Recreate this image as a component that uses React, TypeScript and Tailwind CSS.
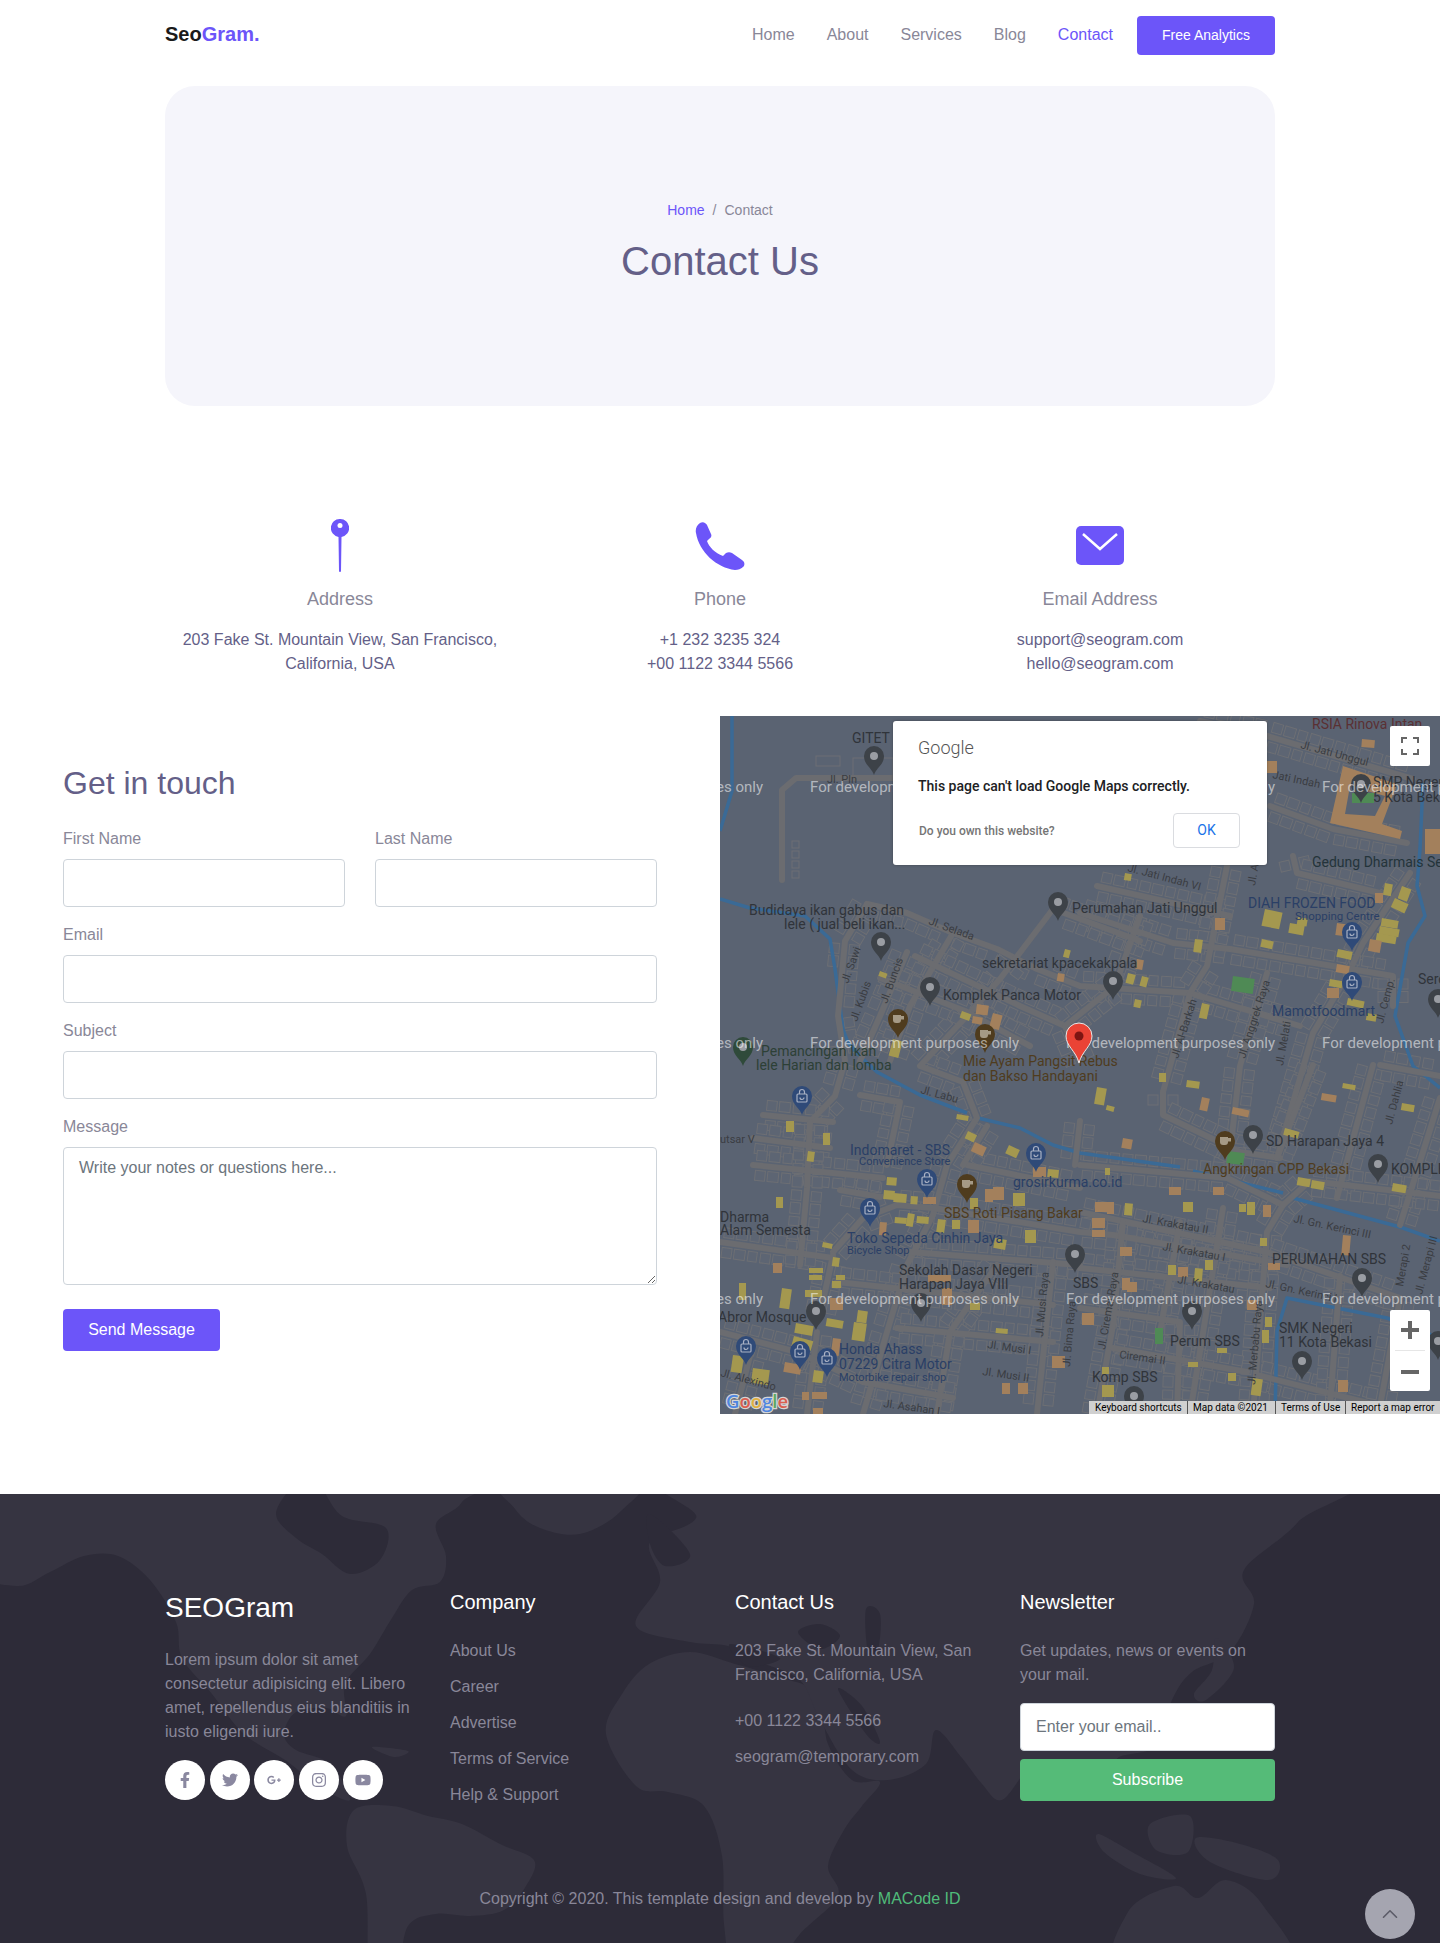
import { ChevronUp } from 'lucide-react';
import { FaFacebookF, FaTwitter, FaGooglePlusG, FaInstagram, FaYoutube } from 'react-icons/fa';

type Pt = [number, number];

const rivers: Pt[][] = [
  [[12, 0], [12, 75], [0, 115]],
  [[0, 183], [30, 192], [85, 200], [110, 223], [115, 253], [123, 313], [128, 327], [143, 343], [157, 356], [200, 379], [247, 397]],
  [[258, 402], [300, 412], [333, 429], [360, 437], [460, 451]],
  [[473, 455], [563, 477]],
  [[573, 482], [680, 511], [720, 525]],
  [[555, 698], [557, 615], [567, 582], [667, 602], [720, 622]],
  [[703, 67], [700, 133], [697, 170], [705, 200], [688, 227], [675, 300], [693, 350], [720, 372]],
];

const roads: Pt[][] = [
  [[62, 164], [62, 74], [76, 62], [180, 62]],
  [[147, 188], [187, 197], [233, 217], [277, 233], [317, 253], [360, 270], [470, 277], [580, 310]],
  [[147, 188], [125, 225], [118, 300], [125, 345], [115, 380], [90, 406]],
  [[333, 193], [280, 263], [247, 300], [200, 350], [243, 366], [257, 402], [227, 449], [213, 499], [187, 549], [167, 616], [143, 698]],
  [[187, 236], [160, 300], [140, 345]],
  [[233, 217], [190, 290], [170, 345]],
  [[195, 240], [300, 290], [345, 310]],
  [[160, 262], [245, 295], [310, 330]],
  [[547, 20], [693, 63]],
  [[480, 5], [547, 20]],
  [[550, 90], [613, 113], [687, 127]],
  [[573, 140], [577, 157], [660, 177]],
  [[690, 157], [643, 227], [627, 260], [593, 317], [557, 442]],
  [[510, 233], [673, 260], [673, 290]],
  [[547, 257], [520, 350], [507, 462]],
  [[360, 197], [453, 227], [510, 233]],
  [[377, 170], [510, 200]],
  [[507, 150], [487, 250], [470, 277], [443, 376]],
  [[420, 200], [395, 270], [345, 310], [360, 345]],
  [[333, 193], [420, 225]],
  [[113, 536], [143, 502], [177, 489], [213, 492], [360, 516], [393, 519], [567, 549]],
  [[100, 599], [113, 539]],
  [[97, 616], [87, 698]],
  [[0, 526], [113, 542]],
  [[43, 399], [113, 406]],
  [[33, 422], [110, 432]],
  [[33, 449], [163, 462]],
  [[120, 474], [160, 481]],
  [[140, 379], [180, 386], [167, 449]],
  [[90, 406], [87, 472], [80, 549]],
  [[177, 612], [333, 626]],
  [[190, 536], [360, 549]],
  [[333, 546], [317, 698]],
  [[277, 549], [230, 616], [217, 698]],
  [[117, 566], [333, 589]],
  [[0, 616], [77, 636], [143, 666], [233, 682]],
  [[247, 449], [360, 472]],
  [[267, 410], [243, 449]],
  [[360, 405], [355, 449]],
  [[443, 376], [443, 399], [520, 436], [560, 442]],
  [[360, 449], [507, 462], [563, 489], [547, 516], [533, 698]],
  [[653, 349], [617, 482]],
  [[680, 509], [720, 382]],
  [[360, 496], [547, 536], [680, 582]],
  [[360, 552], [550, 572]],
  [[403, 506], [393, 609], [377, 698]],
  [[503, 492], [470, 698]],
  [[460, 506], [440, 616]],
  [[360, 592], [460, 606], [457, 698]],
  [[393, 632], [527, 656]],
  [[537, 659], [660, 690]],
  [[593, 349], [557, 442]],
  [[563, 489], [590, 465], [720, 480]],
  [[620, 560], [610, 690]],
  [[680, 582], [660, 690]],
  [[660, 349], [720, 360]],
  [[30, 640], [15, 698]],
];

type Box = [number, number, number, number, number?];

const yellows: Box[] = [
  [160, 255, 8, 5, 20], [242, 295, 10, 7, 20], [345, 233, 6, 8, 15], [173, 323, 10, 17, 15],
  [545, 193, 18, 17, 12], [570, 207, 15, 10, 10], [578, 201, 10, 8, 10], [542, 223, 12, 8, 12], [475, 223, 8, 13, 8],
  [618, 233, 15, 8, 12], [610, 263, 13, 7, 10], [628, 282, 17, 7, 12], [647, 297, 10, 7, 10], [662, 202, 17, 8, 10],
  [660, 210, 20, 8, 10], [657, 217, 20, 8, 10], [675, 182, 15, 10, 25], [682, 170, 10, 13, 20], [665, 167, 8, 12, 10],
  [408, 257, 8, 10, 15], [422, 260, 7, 10, 15], [415, 283, 7, 8, 12], [405, 157, 7, 7, 10], [482, 287, 8, 15, 12],
  [66, 405, 8, 11], [103, 417, 7, 12], [88, 435, 7, 10, 8], [56, 481, 7, 11], [19, 567, 7, 17], [62, 572, 10, 20, 8],
  [89, 552, 14, 5], [89, 559, 13, 5], [116, 559, 9, 5], [112, 565, 9, 7], [113, 541, 7, 9, 8], [103, 526, 10, 5, 12],
  [85, 574, 17, 7], [107, 602, 17, 8, 10], [76, 607, 18, 10, 10], [74, 620, 20, 10, 15], [134, 606, 13, 18, 8],
  [138, 594, 10, 12, 8], [33, 652, 17, 15, 8], [13, 639, 11, 17, 8], [94, 654, 10, 12, 8], [167, 461, 10, 8, 5],
  [164, 474, 11, 9, 5], [174, 477, 13, 9, 5], [191, 480, 7, 8, 5], [175, 501, 12, 6, 5], [188, 497, 7, 13, 10],
  [197, 500, 12, 7, 5], [218, 503, 8, 13, 8], [232, 504, 8, 9], [250, 482, 8, 11], [293, 477, 12, 13], [305, 514, 11, 13],
  [276, 612, 12, 5, 5], [275, 522, 12, 10, 10], [248, 415, 10, 8, 25], [289, 429, 12, 9, 25], [328, 453, 11, 8, 5],
  [237, 398, 12, 5, 10], [250, 587, 10, 7], [377, 371, 10, 17, 10], [387, 389, 8, 5, 15], [439, 357, 7, 9], [467, 364, 13, 7, 8],
  [623, 367, 13, 5, 10], [565, 412, 15, 7, 15], [682, 387, 13, 7, 10], [578, 461, 13, 8, 10], [592, 464, 13, 8, 10],
  [673, 467, 14, 8, 10], [385, 452, 5, 7], [405, 487, 8, 12, 5], [463, 486, 10, 10], [519, 488, 7, 8], [527, 486, 8, 13],
  [540, 522, 7, 8], [448, 549, 8, 10], [475, 552, 8, 13, 5], [485, 544, 8, 10], [545, 601, 7, 10], [542, 614, 7, 13],
  [497, 632, 10, 5], [468, 646, 10, 5], [508, 657, 8, 8], [533, 662, 10, 17, 8], [382, 669, 12, 12], [382, 651, 7, 7],
];

const oranges: Box[] = [
  [257, 288, 12, 10, 8], [253, 300, 10, 7, 10], [273, 297, 10, 15, 15], [338, 257, 7, 8, 10], [495, 202, 10, 12],
  [617, 207, 12, 12, 8], [617, 248, 13, 8, 10], [607, 272, 12, 10], [650, 223, 12, 12, 10], [655, 177, 8, 10],
  [705, 113, 15, 25], [642, 23, 13, 8, 5], [547, 45, 10, 12], [417, 243, 7, 10, 10], [53, 547, 9, 10], [255, 426, 13, 10, 25],
  [265, 473, 8, 13], [273, 471, 11, 13], [248, 504, 11, 13], [313, 451, 13, 10], [203, 481, 13, 7], [222, 572, 10, 17],
  [208, 559, 23, 7], [65, 646, 17, 10, 10], [92, 676, 15, 7], [82, 676, 7, 8], [93, 692, 10, 7], [113, 622, 8, 17, 8],
  [332, 640, 13, 12], [282, 667, 8, 11], [298, 667, 10, 11], [160, 506, 7, 13, 5], [110, 582, 13, 12], [482, 381, 8, 13, 12],
  [513, 391, 17, 7, 12], [602, 377, 15, 7, 10], [403, 422, 10, 10, 10], [449, 471, 12, 8], [493, 471, 11, 8], [375, 486, 12, 10],
  [387, 486, 7, 12], [372, 502, 13, 10], [372, 514, 13, 7], [543, 489, 8, 12], [400, 531, 12, 9], [458, 551, 10, 10], [402, 562, 8, 12],
  [407, 566, 10, 10], [623, 519, 8, 20, 5], [548, 547, 12, 7], [527, 584, 10, 10], [362, 597, 12, 12], [618, 664, 10, 12],
];

const greens: Box[] = [[513, 260, 22, 15, 8], [435, 612, 8, 16], [508, 435, 17, 12, 8]];

// soft outlined house blocks along the streets, skipped over the empty fields at top left
function isOpen(x: number, y: number) {
  if (x < 112 && y < 350) return true;
  if (x < 340 && y < 190 + (x - 150) * 0.42) return true;
  return false;
}

function makeBlocks() {
  const out: { x: number; y: number; a: number; w: number }[] = [];
  roads.forEach((road) => {
    for (let i = 0; i < road.length - 1; i++) {
      const [x1, y1] = road[i];
      const [x2, y2] = road[i + 1];
      const len = Math.hypot(x2 - x1, y2 - y1);
      const ux = (x2 - x1) / len;
      const uy = (y2 - y1) / len;
      const a = (Math.atan2(uy, ux) * 180) / Math.PI;
      let n = 0;
      for (let d = 8; d < len - 4; d += 13) {
        n++;
        [-1, 1].forEach((side) => {
          const x = x1 + ux * d - uy * side * 10;
          const y = y1 + uy * d + ux * side * 10;
          if (!isOpen(x, y)) out.push({ x, y, a, w: 9 + (n % 3) });
        });
      }
    }
  });
  return out;
}

const blocks = makeBlocks();

type Label = [string, number, number, string?, number?];

const labels: Label[] = [
  ['GITET', 132, 27], ['Budidaya ikan gabus dan', 29, 199], ['lele ( jual beli ikan...', 64, 213],
  ['Pemancingan Ikan', 41, 340, '#2d4036'], ['lele Harian dan lomba', 36, 354, '#2d4036'],
  ['Komplek Panca Motor', 223, 284], ['sekretariat kpacekakpala', 262, 252], ['Perumahan Jati Unggul', 352, 197],
  ['Mie Ayam Pangsit Rebus', 243, 350, '#4f3c1e'], ['dan Bakso Handayani', 243, 365, '#4f3c1e'],
  ['RSIA Rinova Intan', 592, 13, '#5a3033'], ['SMP Negeri', 653, 71], ['5 Kota Bekasi', 653, 86],
  ['Gedung Dharmais Sejahtera', 592, 151, '#24343a'], ['DIAH FROZEN FOOD', 528, 192, '#2a3f66'],
  ['Shopping Centre', 575, 204, '#2a3f66', 11.5], ['Mamotfoodmart', 552, 300, '#2a3f66'], ['Seroja', 698, 268],
  ['Indomaret - SBS', 130, 439, '#2a3f66'], ['Convenience Store', 139, 449, '#2a3f66', 11], ['grosirkurma.co.id', 293, 471, '#2a3f66'],
  ['SBS Roti Pisang Bakar', 224, 502, '#4f3c1e'], ['Dharma', 0, 506], ['Alam Semesta', 0, 519],
  ['Toko Sepeda Cinhin Jaya', 127, 527, '#2a3f66'], ['Bicycle Shop', 127, 538, '#2a3f66', 11],
  ['Sekolah Dasar Negeri', 179, 559], ['Harapan Jaya VIII', 179, 573], ['Abror Mosque', -2, 606],
  ['Honda Ahass', 119, 638, '#2a3f66'], ['07229 Citra Motor', 119, 653, '#2a3f66'], ['Motorbike repair shop', 119, 665, '#2a3f66', 11],
  ['SBS', 353, 572], ['Perum SBS', 450, 630], ['Komp SBS', 372, 666], ['SMK Negeri', 559, 617], ['11 Kota Bekasi', 559, 631],
  ['PERUMAHAN SBS', 552, 548], ['SD Harapan Jaya 4', 546, 430], ['Angkringan CPP Bekasi', 483, 458, '#4f3c1e'], ['KOMPLEK', 671, 458],
  ['utsar V', 0, 427, '#3a3d42', 11],
];

type StreetName = [string, number, number, number];

const streetNames: StreetName[] = [
  ['Jl. Pln', 107, 67, 0], ['Jl. Selada', 208, 208, 20], ['Jl. Sawi', 128, 268, -70], ['Jl. Kubis', 137, 306, -70], ['Jl. Buncis', 167, 288, -70],
  ['Jl. Labu', 200, 377, 15], ['Jl. Jati Unggul', 580, 32, 15], ['Jati Indah', 552, 62, 12], ['Jl. Jati Indah VI', 407, 155, 15],
  ['Jl. Anggrek Raya', 525, 343, -72], ['Jl. Al-Barkah', 458, 343, -72], ['Jl. Melati', 563, 350, -80], ['Jl. Cemp.', 663, 308, -75], ['Jl. A', 535, 170, -80],
  ['Jl. Krakatau II', 422, 506, 10], ['Jl. Krakatau I', 442, 534, 10], ['Jl. Krakatau', 457, 567, 10], ['Jl. Gn. Kerinci III', 573, 506, 12], ['Jl. Gn. Kerinci I', 545, 571, 12],
  ['Ciremai II', 399, 642, 8], ['Jl. Ciremai Raya', 385, 634, -80], ['Jl. Merbabu Raya', 535, 669, -85], ['Merapi 2', 683, 571, -80], ['Jl. Merapi III', 702, 579, -75],
  ['Jl. Dahlia', 672, 409, -75], ['Jl. Musi Raya', 323, 621, -85], ['Jl. Bima Raya', 350, 651, -85], ['Jl. Musi I', 267, 632, 8], ['Jl. Musi II', 262, 659, 8],
  ['Jl. Asahan I', 163, 691, 8], ['Jl. Alexindo', 0, 660, 15],
];

const darkPins: Pt[] = [[154, 59], [161, 245], [210, 290], [338, 205], [393, 284], [641, 87], [718, 302], [355, 557], [96, 614], [201, 606], [533, 438], [658, 467], [642, 581], [472, 614], [582, 664], [414, 699], [718, 644]];
const bluePins: Pt[] = [[632, 235], [632, 285], [82, 399], [316, 456], [207, 482], [150, 511], [26, 649], [80, 654], [107, 661]];
const brownPins: Pt[] = [[178, 322], [265, 337], [247, 487], [505, 444]];

function Pin({ at, fill, inner }: { at: Pt; fill: string; inner: 'dot' | 'bag' | 'cup' }) {
  const [x, y] = at;
  return (
    <g transform={`translate(${x} ${y})`}>
      <path d="M0 0C-2-7-10-10-10-19a10 10 0 1 1 20 0C10-10 2-7 0 0Z" fill={fill} />
      {inner === 'dot' && <circle cx="0" cy="-19" r="4" fill="#9a9da3" />}
      {inner === 'bag' && (
        <g fill="none" stroke="#a9b1c4" strokeWidth="1.2">
          <rect x="-5" y="-21" width="10" height="8" rx="1" />
          <path d="M-2.500-21v-2a2.500 2.500 0 0 1 5 0v2M-2-17.500a2 2 0 0 0 4 0" />
        </g>
      )}
      {inner === 'cup' && (
        <g fill="#a59a86">
          <path d="M-5-23h8v5a3 3 0 0 1-3 3h-2a3 3 0 0 1-3-3Z" />
          <path d="M3-22h3v3.500H3Z" />
        </g>
      )}
    </g>
  );
}

function MapCanvas() {
  const watermarkX = [-166, 90, 346, 602];
  const watermarkY = [76, 332, 588];
  return (
    <svg viewBox="0 0 720 698" className="block h-full w-full font-['Roboto',sans-serif]">
      <rect width="720" height="698" fill="#5a6372" />
      {blocks.map((b, i) => (
        <rect
          key={i}
          x={-b.w / 2}
          y={-5}
          width={b.w}
          height={10}
          fill="#5d6573"
          stroke="#6d6f74"
          strokeWidth="1"
          transform={`translate(${b.x} ${b.y}) rotate(${b.a})`}
        />
      ))}
      {[125, 135, 145, 155].map((y) => (
        <rect key={y} x={72} y={y} width="7" height="7" fill="none" stroke="#6d6f74" />
      ))}
      <rect x="96" y="40" width="24" height="10" fill="none" stroke="#6d6f74" />
      <rect x="133" y="42" width="40" height="18" fill="none" stroke="#6d6f74" />
      {rivers.map((r, i) => (
        <polyline key={i} points={r.join(' ')} fill="none" stroke="#3a6a96" strokeWidth="3.5" strokeLinejoin="round" />
      ))}
      {roads.map((r, i) => (
        <polyline key={i} points={r.join(' ')} fill="none" stroke="#6b6c70" strokeWidth="6" strokeLinejoin="round" strokeLinecap="round" />
      ))}
      <path fillRule="evenodd" d="M623 50 677 68 662 108 682 115 680 123 610 107ZM630 70 665 80 655 100 625 98Z" fill="#a3805c" />
      <rect x="632" y="77" width="22" height="10" fill="#4f8a55" />
      {yellows.map(([x, y, w, h, r], i) => (
        <rect key={i} x={x} y={y} width={w} height={h} fill="#a4984f" transform={`rotate(${r ?? 0} ${x} ${y})`} />
      ))}
      {oranges.map(([x, y, w, h, r], i) => (
        <rect key={i} x={x} y={y} width={w} height={h} fill="#a3805c" transform={`rotate(${r ?? 0} ${x} ${y})`} />
      ))}
      {greens.map(([x, y, w, h, r], i) => (
        <rect key={i} x={x} y={y} width={w} height={h} fill="#4f8a55" transform={`rotate(${r ?? 0} ${x} ${y})`} />
      ))}
      {labels.map(([t, x, y, c, s]) => (
        <text key={t} x={x} y={y} fontSize={s ?? 14} fill={c ?? '#30343a'}>
          {t}
        </text>
      ))}
      {streetNames.map(([t, x, y, a]) => (
        <text key={t} x={x} y={y} fontSize="11" fill="#3a3d42" transform={`rotate(${a} ${x} ${y})`}>
          {t}
        </text>
      ))}
      {darkPins.map((p, i) => (
        <Pin key={i} at={p} fill="#3d4248" inner="dot" />
      ))}
      {bluePins.map((p, i) => (
        <Pin key={i} at={p} fill="#2f4a78" inner="bag" />
      ))}
      {brownPins.map((p, i) => (
        <Pin key={i} at={p} fill="#4f3c1e" inner="cup" />
      ))}
      <Pin at={[23, 350]} fill="#2f4a3a" inner="dot" />
      {watermarkY.map((y) =>
        watermarkX.map((x) => (
          <text key={`${x}-${y}`} x={x} y={y} fontSize="15" fill="#ffffff" fillOpacity="0.55">
            For development purposes only
          </text>
        )),
      )}
      <path d="M359 347C356 335 346 330 346 320a13 13 0 1 1 26 0C372 330 362 335 359 347Z" fill="#ea4335" stroke="#e8e8e8" strokeWidth="1" />
      <circle cx="359" cy="320" r="4.500" fill="#7d1512" />
      <text x="6" y="692" fontSize="18.500" fontWeight="600" fontFamily="'Open Sans', sans-serif" stroke="#d5d5d5" strokeWidth="2.500" paintOrder="stroke">
        <tspan fill="#4f86e0">G</tspan>
        <tspan fill="#d95f50">o</tspan>
        <tspan fill="#e0b040">o</tspan>
        <tspan fill="#4f86e0">g</tspan>
        <tspan fill="#5aa860">l</tspan>
        <tspan fill="#d95f50">e</tspan>
      </text>
    </svg>
  );
}

function GoogleMap() {
  return (
    <div className="relative h-[698px] overflow-hidden">
      <MapCanvas />
      {/* error dialog */}
      <div className="absolute left-[173px] top-[5px] h-[144px] w-[374px] rounded-[3px] bg-white font-['Roboto',sans-serif] shadow-[0_0_3px_rgba(0,0,0,0.3)]">
        <div className="ml-[25px] mt-[15px] text-[18px] font-light leading-[24px] text-[#555555]">Google</div>
        <div className="ml-[25px] mt-[16px] text-[14px] font-medium leading-[20px] text-[#202124]">This page can't load Google Maps correctly.</div>
        <div className="mt-[17px] flex items-center justify-between pl-[26px] pr-[27px]">
          <span className="text-[12px] font-medium text-[#757575]">Do you own this website?</span>
          <button className="h-[35px] w-[67px] rounded-[4px] border border-[#dadce0] text-[14px] text-[#1a73e8]">OK</button>
        </div>
      </div>
      {/* fullscreen */}
      <div className="absolute left-[670px] top-[10px] flex h-[40px] w-[40px] items-center justify-center rounded-[2px] bg-white">
        <svg width="18" height="18" viewBox="0 0 18 18" fill="none" stroke="#666666" strokeWidth="2">
          <path d="M1 6V1h5M12 1h5v5M17 12v5h-5M6 17H1v-5" />
        </svg>
      </div>
      {/* zoom */}
      <div className="absolute left-[670px] top-[594px] flex h-[81px] w-[40px] flex-col items-center rounded-[2px] bg-white">
        <svg className="mt-[11px]" width="18" height="18" viewBox="0 0 18 18" fill="#666666">
          <path d="M7 0h4v7h7v4h-7v7H7v-7H0V7h7Z" />
        </svg>
        <div className="mt-[11px] h-px w-[30px] bg-[#e6e6e6]" />
        <svg className="mt-[19px]" width="18" height="4" viewBox="0 0 18 4" fill="#666666">
          <rect width="18" height="4" />
        </svg>
      </div>
      {/* attribution */}
      <div className="absolute bottom-0 right-0 flex h-[13px] items-center bg-[#d0d0d0] font-['Roboto',sans-serif] text-[10px] leading-[13px] text-black">
        <span className="w-[98px] pl-[6px]">Keyboard shortcuts</span>
        <span className="w-[88px] border-l border-[#555555] pl-[5px]">Map data ©2021</span>
        <span className="w-[70px] border-l border-[#555555] pl-[5px]">Terms of Use</span>
        <span className="w-[95px] border-l border-[#555555] pl-[5px]">Report a map error</span>
      </div>
    </div>
  );
}

// closed catmull-rom curve, keeps the rough coastlines from looking like polygons
function smooth(pts: Pt[]) {
  const n = pts.length;
  let d = `M${pts[0][0]} ${pts[0][1]}`;
  for (let i = 0; i < n; i++) {
    const p0 = pts[(i - 1 + n) % n];
    const p1 = pts[i];
    const p2 = pts[(i + 1) % n];
    const p3 = pts[(i + 2) % n];
    const c1x = p1[0] + (p2[0] - p0[0]) / 6;
    const c1y = p1[1] + (p2[1] - p0[1]) / 6;
    const c2x = p2[0] - (p3[0] - p1[0]) / 6;
    const c2y = p2[1] - (p3[1] - p1[1]) / 6;
    d += `C${c1x} ${c1y} ${c2x} ${c2y} ${p2[0]} ${p2[1]}`;
  }
  return d + 'Z';
}

const land: Pt[][] = [
  // north america
  [[-30, -30], [470, -30], [462, 8], [436, 30], [446, 62], [440, 88], [412, 96], [392, 124], [370, 160], [345, 190], [346, 222], [326, 214], [296, 218], [284, 240], [296, 256], [330, 270], [350, 306], [318, 292], [288, 268], [244, 240], [212, 200], [182, 164], [176, 128], [150, 86], [118, 62], [84, 62], [50, 78], [16, 92], [-30, 70]],
  // south america
  [[354, 316], [392, 312], [428, 322], [462, 330], [500, 350], [534, 366], [526, 392], [504, 416], [470, 422], [436, 420], [408, 432], [396, 480], [370, 480], [366, 400], [347, 352]],
  // greenland
  [[500, -20], [640, -20], [620, 18], [580, 40], [540, 34], [515, 15]],
  // africa
  [[649, 170], [690, 158], [735, 170], [775, 182], [818, 200], [828, 250], [852, 286], [880, 288], [862, 312], [844, 336], [828, 372], [838, 402], [800, 440], [770, 480], [735, 480], [724, 430], [722, 362], [704, 312], [668, 298], [636, 292], [606, 240], [622, 200]],
  // eurasia
  [[636, 132], [660, 88], [650, 48], [696, 24], [696, -30], [1330, -30], [1298, 28], [1244, 76], [1254, 110], [1230, 158], [1192, 178], [1172, 206], [1156, 252], [1116, 266], [1126, 304], [1106, 298], [1092, 270], [1070, 266], [1032, 272], [1002, 306], [982, 290], [962, 264], [936, 236], [926, 270], [888, 286], [852, 276], [820, 226], [800, 186], [760, 168], [728, 152], [690, 148]],
  // australia
  [[1124, 480], [1128, 418], [1174, 392], [1198, 404], [1226, 386], [1262, 410], [1290, 480]],
  // islands
  [[1098, 340], [1132, 358], [1176, 384], [1140, 380], [1104, 358]],
  [[1150, 330], [1190, 322], [1188, 358], [1156, 356]],
  [[1196, 344], [1240, 350], [1278, 366], [1268, 386], [1210, 368]],
  [[1216, 144], [1234, 174], [1206, 206], [1194, 200], [1212, 176]],
  [[372, 253], [408, 257], [394, 263]],
];

const seas: Pt[][] = [
  // hudson bay
  [[318, -10], [342, 22], [386, 34], [380, 66], [350, 80], [322, 60], [296, 44], [276, 20], [296, -10]],
  [[650, 20], [690, 60], [665, 72], [650, 50]],
  [[730, 150], [780, 164], [748, 172]],
  // black sea, caspian, red sea
  [[798, 138], [820, 130], [840, 142], [820, 155]],
  [[866, 115], [880, 120], [878, 155], [868, 158]],
  [[838, 195], [862, 212], [880, 248], [866, 240]],
];

function WorldMap() {
  return (
    <svg viewBox="0 0 1440 449" className="absolute inset-0 h-full w-full">
      {land.map((p, i) => (
        <path key={i} d={smooth(p)} fill="#363441" />
      ))}
      {seas.map((p, i) => (
        <path key={i} d={smooth(p)} fill="#2d2b38" />
      ))}
    </svg>
  );
}

function InfoColumn({ icon, title, lines }: { icon: React.ReactNode; title: string; lines: string[] }) {
  return (
    <div className="flex flex-col items-center text-center">
      <div className="flex h-[53px] items-center justify-center">{icon}</div>
      <div className="mt-[14px] text-[18px] leading-[27px] text-[#898798]">{title}</div>
      <div className="mt-[15px] text-base leading-6 text-[#645f88]">
        {lines.map((l) => (
          <p key={l}>{l}</p>
        ))}
      </div>
    </div>
  );
}

function Field({ label, children }: { label: string; children: React.ReactNode }) {
  return (
    <div>
      <label className="mb-2 block text-base leading-6 text-[#898798]">{label}</label>
      {children}
    </div>
  );
}

const inputClass = 'block h-[48px] w-full rounded-[4px] border border-[#ced4da] bg-white px-[15px] outline-none';

export default function App() {
  const socials = [FaFacebookF, FaTwitter, FaGooglePlusG, FaInstagram, FaYoutube];
  const links = ['About Us', 'Career', 'Advertise', 'Terms of Service', 'Help & Support'];

  return (
    <div className="h-[1943px] overflow-hidden bg-white font-['Liberation_Sans',Arial,sans-serif]">
      {/* Nav */}
      <header className="mx-auto flex w-[1110px] items-center justify-between pb-[31px] pt-4">
        <div className="pb-[2px] text-[20px] font-bold leading-[37px] text-[#1a1a1a]">
          Seo<span className="text-[#6c55f9]">Gram.</span>
        </div>
        <nav className="flex items-center text-base text-[#898798]">
          <a className="mr-8 pb-[2px]">Home</a>
          <a className="mr-8 pb-[2px]">About</a>
          <a className="mr-8 pb-[2px]">Services</a>
          <a className="mr-8 pb-[2px]">Blog</a>
          <a className="pb-[2px] text-[#6c55f9]">Contact</a>
          <button className="ml-6 h-[39px] w-[138px] rounded-[4px] bg-[#6c55f9] text-sm leading-[37px] text-white">Free Analytics</button>
        </nav>
      </header>

      {/* Hero */}
      <section className="mx-auto flex h-[320px] w-[1110px] flex-col items-center rounded-[30px] bg-[#f5f5fb] pt-[114px]">
        <div className="text-sm leading-[21px] text-[#898798]">
          <span className="text-[#6c55f9]">Home</span>
          <span className="mx-2">/</span>
          <span>Contact</span>
        </div>
        <h1 className="mt-[16px] text-[40px] leading-[48px] text-[#645f88]">Contact Us</h1>
      </section>

      {/* Contact info */}
      <section className="mx-auto mt-[113px] grid w-[1140px] grid-cols-3">
        <InfoColumn
          title="Address"
          lines={['203 Fake St. Mountain View, San Francisco,', 'California, USA']}
          icon={
            <svg width="18" height="53" viewBox="0 0 18 53" fill="#6c55f9">
              <path d="M9 0a9 9 0 0 1 1.500 17.900L10 52a1 1 0 0 1-2 0L7.500 17.900A9 9 0 0 1 9 0Z" />
              <circle cx="9" cy="6.500" r="2.500" fill="#ffffff" />
            </svg>
          }
        />
        <InfoColumn
          title="Phone"
          lines={['+1 232 3235 324', '+00 1122 3344 5566']}
          icon={
            <svg width="50" height="48" viewBox="0 0 50 48" fill="#6c55f9">
              <path d="M5 1C8-1 11 1 12 3L16 12C17 14 16 16 14 17L12 19C14 25 20 31 28 34L31 31C33 30 35 30 37 31L47 38C50 40 50 43 48 45C46 47 43 48 40 48C22 46 4 30 1 11C0 7 2 3 5 1Z" />
            </svg>
          }
        />
        <InfoColumn
          title="Email Address"
          lines={['support@seogram.com', 'hello@seogram.com']}
          icon={
            <svg width="48" height="39" viewBox="0 0 48 39">
              <rect width="48" height="39" rx="5" fill="#6c55f9" />
              <path d="M7 8 24 23 41 8" fill="none" stroke="#ffffff" strokeWidth="2.500" />
            </svg>
          }
        />
      </section>

      {/* Form + map */}
      <section className="mt-[40px] grid grid-cols-2">
        <div className="px-[63px] pt-[48px]">
          <h2 className="text-[32px] leading-[38px] text-[#645f88]">Get in touch</h2>
          <form className="mt-[25px] flex flex-col gap-4">
            <div className="grid grid-cols-2 gap-[30px]">
              <Field label="First Name">
                <input className={inputClass} />
              </Field>
              <Field label="Last Name">
                <input className={inputClass} />
              </Field>
            </div>
            <Field label="Email">
              <input className={inputClass} />
            </Field>
            <Field label="Subject">
              <input className={inputClass} />
            </Field>
            <Field label="Message">
              <textarea
                className="block h-[138px] w-full rounded-[4px] border border-[#ced4da] bg-white px-[15px] py-2 text-base leading-6 text-[#495057] outline-none placeholder:text-[#6c757d]"
                placeholder="Write your notes or questions here..."
              />
            </Field>
          </form>
          <button className="mt-[24px] h-[42px] w-[157px] rounded-[4px] bg-[#6c55f9] text-base text-white">Send Message</button>
        </div>
        <GoogleMap />
      </section>

      {/* Footer */}
      <footer className="relative mt-[80px] h-[449px] overflow-hidden bg-[#2d2b38]">
        <WorldMap />
        <div className="relative mx-auto grid w-[1110px] grid-cols-4 gap-[30px] pt-[93px]">
          <div>
            <h3 className="mt-[4px] text-[28px] leading-[34px] text-white">SEOGram</h3>
            <p className="mt-[23px] text-base leading-6 text-[#898798]">Lorem ipsum dolor sit amet consectetur adipisicing elit. Libero amet, repellendus eius blanditiis in iusto eligendi iure.</p>
            <div className="mt-[16px] flex gap-[4.6px]">
              {socials.map((Icon, i) => (
                <span key={i} className="flex h-[40px] w-[40px] items-center justify-center rounded-full bg-white text-[#8a88a0]">
                  <Icon size={i === 2 ? 14 : 16} />
                </span>
              ))}
            </div>
          </div>
          <div>
            <h4 className="text-[20px] leading-[30px] text-white">Company</h4>
            <ul className="mt-[22px] flex flex-col gap-3 text-base leading-6 text-[#898798]">
              {links.map((l) => (
                <li key={l}>{l}</li>
              ))}
            </ul>
          </div>
          <div>
            <h4 className="text-[20px] leading-[30px] text-white">Contact Us</h4>
            <p className="mt-[22px] text-base leading-6 text-[#898798]">203 Fake St. Mountain View, San Francisco, California, USA</p>
            <p className="mt-[22px] text-base leading-6 text-[#898798]">+00 1122 3344 5566</p>
            <p className="mt-3 text-base leading-6 text-[#898798]">seogram@temporary.com</p>
          </div>
          <div>
            <h4 className="text-[20px] leading-[30px] text-white">Newsletter</h4>
            <p className="mt-[22px] text-base leading-6 text-[#898798]">Get updates, news or events on your mail.</p>
            <input className={`${inputClass} mt-[16px] placeholder:text-[#6c757d]`} placeholder="Enter your email.." />
            <button className="mt-[8px] h-[42px] w-full rounded-[4px] bg-[#55bb78] text-base text-white">Subscribe</button>
          </div>
        </div>
        <p className="relative mt-[80px] text-center text-base leading-6 text-[#898798]">
          Copyright © 2020. This template design and develop by <span className="text-[#50bc7a]">MACode ID</span>
        </p>
        <button className="absolute bottom-[4px] right-[25px] flex h-[50px] w-[50px] items-center justify-center rounded-full bg-[#a5a5b0] text-[#5c5c68]">
          <ChevronUp size={26} strokeWidth={1.5} />
        </button>
      </footer>
    </div>
  );
}
